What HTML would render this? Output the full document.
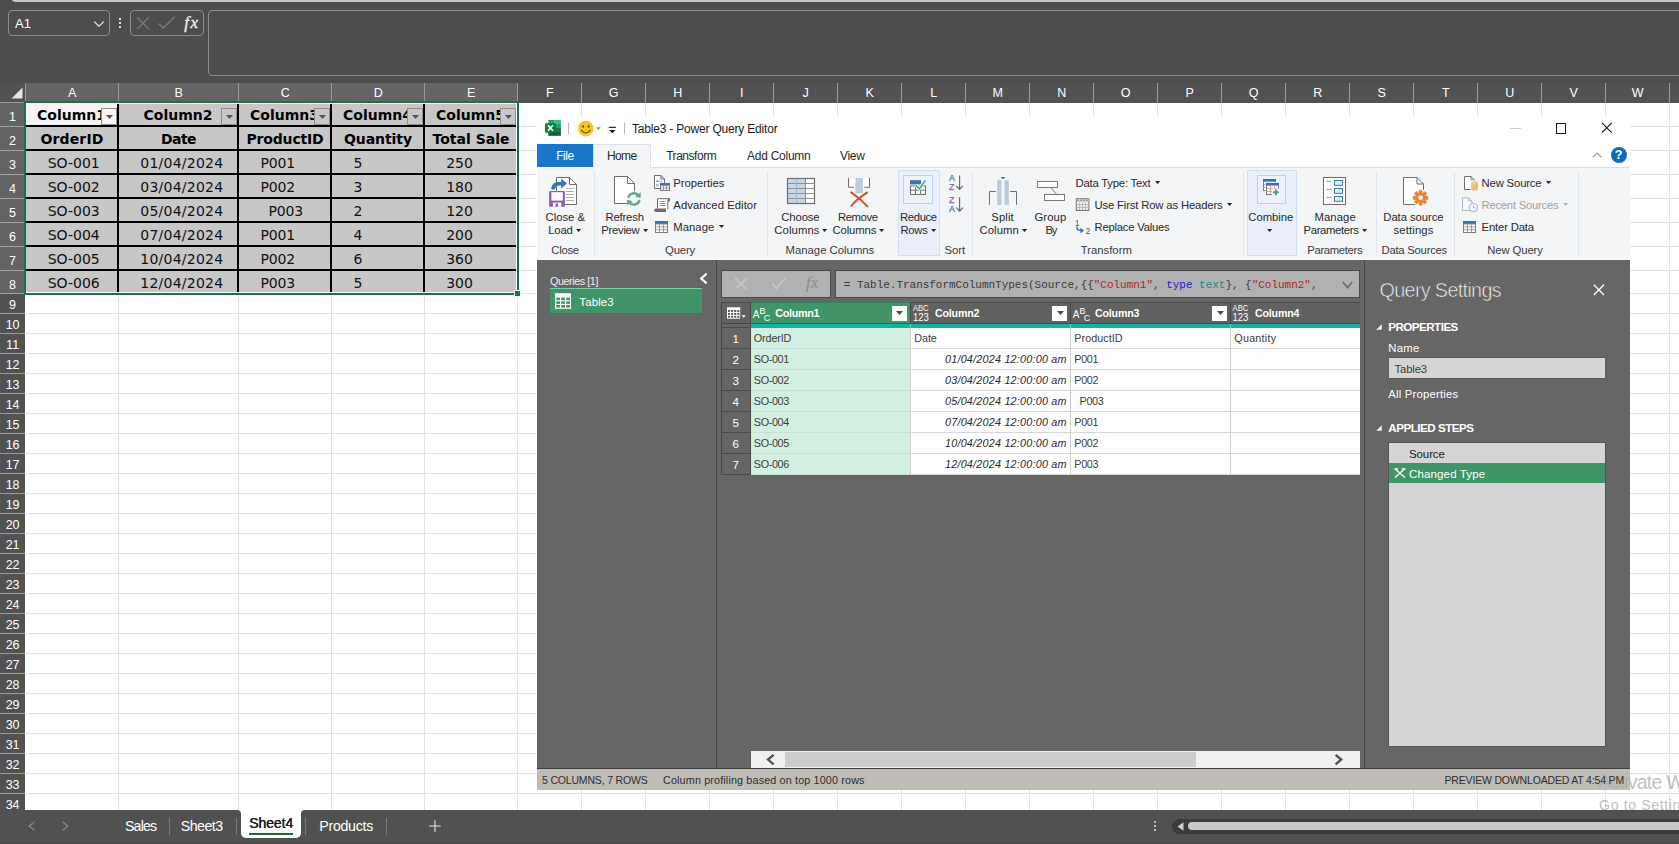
<!DOCTYPE html>
<html lang="en"><head><meta charset="utf-8"><title>Table3 - Power Query Editor</title>
<style>
html,body{margin:0;padding:0;}
body{width:1679px;height:844px;overflow:hidden;background:#4d4d4d;position:relative;font-family:'Liberation Sans', sans-serif;}
#root{position:absolute;left:0;top:0;width:1679px;height:844px;overflow:hidden;}
#root div,#root svg{position:absolute;box-sizing:border-box;}
.t{white-space:pre;}
svg{overflow:visible;}
</style></head>
<body><div id="root">
<div style="left:0px;top:0px;width:1679px;height:103px;background:#4d4d4d;"></div>
<div style="left:9.5px;top:-8px;width:1679px;height:10.2px;background:#c8c8c8;border-radius:5px 0 0 5px;border-left:1.5px solid #2a2a2a;"></div>
<div style="left:8px;top:10px;width:102px;height:26px;border:1px solid #8c8c8c;border-radius:4px;"></div>
<div class="t" style="left:15.00px;top:13.60px;font:400 13px/20px 'Liberation Sans', sans-serif;color:#fff;letter-spacing:0.047px;">A1</div>
<svg style="left:93px;top:20px" width="12" height="8" viewBox="0 0 12 8"><path d="M1.2 1.6 L6 6.2 L10.8 1.6" fill="none" stroke="#e6e6e6" stroke-width="1.3"/></svg>
<div style="left:118.6px;top:17.7px;width:2.4px;height:2.4px;background:#f0f0f0;border-radius:0.6px;"></div>
<div style="left:118.6px;top:21.900000000000002px;width:2.4px;height:2.4px;background:#f0f0f0;border-radius:0.6px;"></div>
<div style="left:118.6px;top:26.1px;width:2.4px;height:2.4px;background:#f0f0f0;border-radius:0.6px;"></div>
<div style="left:130px;top:10px;width:74px;height:26px;border:1px solid #8c8c8c;border-radius:4px;"></div>
<svg style="left:136px;top:15px" width="66" height="16" viewBox="0 0 66 16"><path d="M1.1 2.4 L12.9 14.2 M12.9 2.4 L1.1 14.2" stroke="#858585" stroke-width="1.1" fill="none"/><path d="M22.8 8.6 L27.3 13 L38.8 1.8" stroke="#858585" stroke-width="1.1" fill="none"/></svg>
<div class="t" style="left:184.30px;top:12.60px;font:italic 400 17px/20px 'Liberation Serif', serif;color:#ededed;letter-spacing:1.359px;-webkit-text-stroke:0.35px #ededed;">fx</div>
<div style="left:208px;top:10px;width:1679px;height:66px;border:1px solid #8c8c8c;border-radius:4px;"></div>
<div style="left:0px;top:83px;width:1679px;height:20px;background:#525252;"></div>
<div style="left:26px;top:83px;width:491px;height:19px;background:#646464;"></div>
<div style="left:25px;top:83px;width:1px;height:19px;background:#9a9a9a;"></div>
<div style="left:118px;top:83px;width:1px;height:19px;background:#9a9a9a;"></div>
<div style="left:238px;top:83px;width:1px;height:19px;background:#9a9a9a;"></div>
<div style="left:331px;top:83px;width:1px;height:19px;background:#9a9a9a;"></div>
<div style="left:424px;top:83px;width:1px;height:19px;background:#9a9a9a;"></div>
<div style="left:517px;top:83px;width:1px;height:19px;background:#9a9a9a;"></div>
<div style="left:581px;top:83px;width:1px;height:20px;background:#9a9a9a;"></div>
<div style="left:645px;top:83px;width:1px;height:20px;background:#9a9a9a;"></div>
<div style="left:709px;top:83px;width:1px;height:20px;background:#9a9a9a;"></div>
<div style="left:773px;top:83px;width:1px;height:20px;background:#9a9a9a;"></div>
<div style="left:837px;top:83px;width:1px;height:20px;background:#9a9a9a;"></div>
<div style="left:901px;top:83px;width:1px;height:20px;background:#9a9a9a;"></div>
<div style="left:965px;top:83px;width:1px;height:20px;background:#9a9a9a;"></div>
<div style="left:1029px;top:83px;width:1px;height:20px;background:#9a9a9a;"></div>
<div style="left:1093px;top:83px;width:1px;height:20px;background:#9a9a9a;"></div>
<div style="left:1157px;top:83px;width:1px;height:20px;background:#9a9a9a;"></div>
<div style="left:1221px;top:83px;width:1px;height:20px;background:#9a9a9a;"></div>
<div style="left:1285px;top:83px;width:1px;height:20px;background:#9a9a9a;"></div>
<div style="left:1349px;top:83px;width:1px;height:20px;background:#9a9a9a;"></div>
<div style="left:1413px;top:83px;width:1px;height:20px;background:#9a9a9a;"></div>
<div style="left:1477px;top:83px;width:1px;height:20px;background:#9a9a9a;"></div>
<div style="left:1541px;top:83px;width:1px;height:20px;background:#9a9a9a;"></div>
<div style="left:1605px;top:83px;width:1px;height:20px;background:#9a9a9a;"></div>
<div style="left:1669px;top:83px;width:1px;height:20px;background:#9a9a9a;"></div>
<div style="left:1733px;top:83px;width:1px;height:20px;background:#9a9a9a;"></div>
<div style="left:1797px;top:83px;width:1px;height:20px;background:#9a9a9a;"></div>
<div class="t" style="left:68.03px;top:82.50px;font:400 12.5px/20px 'Liberation Sans', sans-serif;color:#fff;">A</div>
<div class="t" style="left:174.53px;top:82.50px;font:400 12.5px/20px 'Liberation Sans', sans-serif;color:#fff;">B</div>
<div class="t" style="left:280.68px;top:82.50px;font:400 12.5px/20px 'Liberation Sans', sans-serif;color:#fff;">C</div>
<div class="t" style="left:373.68px;top:82.50px;font:400 12.5px/20px 'Liberation Sans', sans-serif;color:#fff;">D</div>
<div class="t" style="left:467.03px;top:82.50px;font:400 12.5px/20px 'Liberation Sans', sans-serif;color:#fff;">E</div>
<div class="t" style="left:545.88px;top:82.50px;font:400 12.5px/20px 'Liberation Sans', sans-serif;color:#fff;">F</div>
<div class="t" style="left:608.83px;top:82.50px;font:400 12.5px/20px 'Liberation Sans', sans-serif;color:#fff;">G</div>
<div class="t" style="left:673.18px;top:82.50px;font:400 12.5px/20px 'Liberation Sans', sans-serif;color:#fff;">H</div>
<div class="t" style="left:739.96px;top:82.50px;font:400 12.5px/20px 'Liberation Sans', sans-serif;color:#fff;">I</div>
<div class="t" style="left:802.58px;top:82.50px;font:400 12.5px/20px 'Liberation Sans', sans-serif;color:#fff;">J</div>
<div class="t" style="left:865.53px;top:82.50px;font:400 12.5px/20px 'Liberation Sans', sans-serif;color:#fff;">K</div>
<div class="t" style="left:930.22px;top:82.50px;font:400 12.5px/20px 'Liberation Sans', sans-serif;color:#fff;">L</div>
<div class="t" style="left:992.49px;top:82.50px;font:400 12.5px/20px 'Liberation Sans', sans-serif;color:#fff;">M</div>
<div class="t" style="left:1057.18px;top:82.50px;font:400 12.5px/20px 'Liberation Sans', sans-serif;color:#fff;">N</div>
<div class="t" style="left:1120.83px;top:82.50px;font:400 12.5px/20px 'Liberation Sans', sans-serif;color:#fff;">O</div>
<div class="t" style="left:1185.53px;top:82.50px;font:400 12.5px/20px 'Liberation Sans', sans-serif;color:#fff;">P</div>
<div class="t" style="left:1248.83px;top:82.50px;font:400 12.5px/20px 'Liberation Sans', sans-serif;color:#fff;">Q</div>
<div class="t" style="left:1313.18px;top:82.50px;font:400 12.5px/20px 'Liberation Sans', sans-serif;color:#fff;">R</div>
<div class="t" style="left:1377.53px;top:82.50px;font:400 12.5px/20px 'Liberation Sans', sans-serif;color:#fff;">S</div>
<div class="t" style="left:1441.88px;top:82.50px;font:400 12.5px/20px 'Liberation Sans', sans-serif;color:#fff;">T</div>
<div class="t" style="left:1505.18px;top:82.50px;font:400 12.5px/20px 'Liberation Sans', sans-serif;color:#fff;">U</div>
<div class="t" style="left:1569.53px;top:82.50px;font:400 12.5px/20px 'Liberation Sans', sans-serif;color:#fff;">V</div>
<div class="t" style="left:1631.79px;top:82.50px;font:400 12.5px/20px 'Liberation Sans', sans-serif;color:#fff;">W</div>
<svg style="left:10px;top:86px" width="14" height="14" viewBox="0 0 14 14"><path d="M12.5 1.5 L12.5 12.5 L1.5 12.5 Z" fill="#e4e4e4"/></svg>
<div style="left:25px;top:103px;width:1679px;height:707px;background:#fff;"></div>
<div style="left:25px;top:126px;width:1679px;height:1px;background:#e1e1e1;"></div>
<div style="left:25px;top:150px;width:1679px;height:1px;background:#e1e1e1;"></div>
<div style="left:25px;top:174px;width:1679px;height:1px;background:#e1e1e1;"></div>
<div style="left:25px;top:198px;width:1679px;height:1px;background:#e1e1e1;"></div>
<div style="left:25px;top:222px;width:1679px;height:1px;background:#e1e1e1;"></div>
<div style="left:25px;top:246px;width:1679px;height:1px;background:#e1e1e1;"></div>
<div style="left:25px;top:270px;width:1679px;height:1px;background:#e1e1e1;"></div>
<div style="left:25px;top:293px;width:1679px;height:1px;background:#e1e1e1;"></div>
<div style="left:25px;top:313px;width:1679px;height:1px;background:#e1e1e1;"></div>
<div style="left:25px;top:333px;width:1679px;height:1px;background:#e1e1e1;"></div>
<div style="left:25px;top:353px;width:1679px;height:1px;background:#e1e1e1;"></div>
<div style="left:25px;top:373px;width:1679px;height:1px;background:#e1e1e1;"></div>
<div style="left:25px;top:393px;width:1679px;height:1px;background:#e1e1e1;"></div>
<div style="left:25px;top:413px;width:1679px;height:1px;background:#e1e1e1;"></div>
<div style="left:25px;top:433px;width:1679px;height:1px;background:#e1e1e1;"></div>
<div style="left:25px;top:453px;width:1679px;height:1px;background:#e1e1e1;"></div>
<div style="left:25px;top:473px;width:1679px;height:1px;background:#e1e1e1;"></div>
<div style="left:25px;top:493px;width:1679px;height:1px;background:#e1e1e1;"></div>
<div style="left:25px;top:513px;width:1679px;height:1px;background:#e1e1e1;"></div>
<div style="left:25px;top:533px;width:1679px;height:1px;background:#e1e1e1;"></div>
<div style="left:25px;top:553px;width:1679px;height:1px;background:#e1e1e1;"></div>
<div style="left:25px;top:573px;width:1679px;height:1px;background:#e1e1e1;"></div>
<div style="left:25px;top:593px;width:1679px;height:1px;background:#e1e1e1;"></div>
<div style="left:25px;top:613px;width:1679px;height:1px;background:#e1e1e1;"></div>
<div style="left:25px;top:633px;width:1679px;height:1px;background:#e1e1e1;"></div>
<div style="left:25px;top:653px;width:1679px;height:1px;background:#e1e1e1;"></div>
<div style="left:25px;top:673px;width:1679px;height:1px;background:#e1e1e1;"></div>
<div style="left:25px;top:693px;width:1679px;height:1px;background:#e1e1e1;"></div>
<div style="left:25px;top:713px;width:1679px;height:1px;background:#e1e1e1;"></div>
<div style="left:25px;top:733px;width:1679px;height:1px;background:#e1e1e1;"></div>
<div style="left:25px;top:753px;width:1679px;height:1px;background:#e1e1e1;"></div>
<div style="left:25px;top:773px;width:1679px;height:1px;background:#e1e1e1;"></div>
<div style="left:25px;top:793px;width:1679px;height:1px;background:#e1e1e1;"></div>
<div style="left:118px;top:103px;width:1px;height:707px;background:#e1e1e1;"></div>
<div style="left:238px;top:103px;width:1px;height:707px;background:#e1e1e1;"></div>
<div style="left:331px;top:103px;width:1px;height:707px;background:#e1e1e1;"></div>
<div style="left:424px;top:103px;width:1px;height:707px;background:#e1e1e1;"></div>
<div style="left:517px;top:103px;width:1px;height:707px;background:#e1e1e1;"></div>
<div style="left:581px;top:103px;width:1px;height:707px;background:#e1e1e1;"></div>
<div style="left:645px;top:103px;width:1px;height:707px;background:#e1e1e1;"></div>
<div style="left:709px;top:103px;width:1px;height:707px;background:#e1e1e1;"></div>
<div style="left:773px;top:103px;width:1px;height:707px;background:#e1e1e1;"></div>
<div style="left:837px;top:103px;width:1px;height:707px;background:#e1e1e1;"></div>
<div style="left:901px;top:103px;width:1px;height:707px;background:#e1e1e1;"></div>
<div style="left:965px;top:103px;width:1px;height:707px;background:#e1e1e1;"></div>
<div style="left:1029px;top:103px;width:1px;height:707px;background:#e1e1e1;"></div>
<div style="left:1093px;top:103px;width:1px;height:707px;background:#e1e1e1;"></div>
<div style="left:1157px;top:103px;width:1px;height:707px;background:#e1e1e1;"></div>
<div style="left:1221px;top:103px;width:1px;height:707px;background:#e1e1e1;"></div>
<div style="left:1285px;top:103px;width:1px;height:707px;background:#e1e1e1;"></div>
<div style="left:1349px;top:103px;width:1px;height:707px;background:#e1e1e1;"></div>
<div style="left:1413px;top:103px;width:1px;height:707px;background:#e1e1e1;"></div>
<div style="left:1477px;top:103px;width:1px;height:707px;background:#e1e1e1;"></div>
<div style="left:1541px;top:103px;width:1px;height:707px;background:#e1e1e1;"></div>
<div style="left:1605px;top:103px;width:1px;height:707px;background:#e1e1e1;"></div>
<div style="left:1669px;top:103px;width:1px;height:707px;background:#e1e1e1;"></div>
<div style="left:1733px;top:103px;width:1px;height:707px;background:#e1e1e1;"></div>
<div style="left:1797px;top:103px;width:1px;height:707px;background:#e1e1e1;"></div>
<div style="left:0px;top:103px;width:25px;height:707px;background:#525252;"></div>
<div style="left:0px;top:103px;width:24px;height:191px;background:#646464;"></div>
<div style="left:0px;top:102px;width:24px;height:1px;background:#9a9a9a;"></div>
<div style="left:0px;top:126px;width:25px;height:1px;background:#a2a2a2;"></div>
<div style="left:0px;top:150px;width:25px;height:1px;background:#a2a2a2;"></div>
<div style="left:0px;top:174px;width:25px;height:1px;background:#a2a2a2;"></div>
<div style="left:0px;top:198px;width:25px;height:1px;background:#a2a2a2;"></div>
<div style="left:0px;top:222px;width:25px;height:1px;background:#a2a2a2;"></div>
<div style="left:0px;top:246px;width:25px;height:1px;background:#a2a2a2;"></div>
<div style="left:0px;top:270px;width:25px;height:1px;background:#a2a2a2;"></div>
<div style="left:0px;top:293px;width:25px;height:1px;background:#a2a2a2;"></div>
<div style="left:0px;top:313px;width:25px;height:1px;background:#9a9a9a;"></div>
<div style="left:0px;top:333px;width:25px;height:1px;background:#9a9a9a;"></div>
<div style="left:0px;top:353px;width:25px;height:1px;background:#9a9a9a;"></div>
<div style="left:0px;top:373px;width:25px;height:1px;background:#9a9a9a;"></div>
<div style="left:0px;top:393px;width:25px;height:1px;background:#9a9a9a;"></div>
<div style="left:0px;top:413px;width:25px;height:1px;background:#9a9a9a;"></div>
<div style="left:0px;top:433px;width:25px;height:1px;background:#9a9a9a;"></div>
<div style="left:0px;top:453px;width:25px;height:1px;background:#9a9a9a;"></div>
<div style="left:0px;top:473px;width:25px;height:1px;background:#9a9a9a;"></div>
<div style="left:0px;top:493px;width:25px;height:1px;background:#9a9a9a;"></div>
<div style="left:0px;top:513px;width:25px;height:1px;background:#9a9a9a;"></div>
<div style="left:0px;top:533px;width:25px;height:1px;background:#9a9a9a;"></div>
<div style="left:0px;top:553px;width:25px;height:1px;background:#9a9a9a;"></div>
<div style="left:0px;top:573px;width:25px;height:1px;background:#9a9a9a;"></div>
<div style="left:0px;top:593px;width:25px;height:1px;background:#9a9a9a;"></div>
<div style="left:0px;top:613px;width:25px;height:1px;background:#9a9a9a;"></div>
<div style="left:0px;top:633px;width:25px;height:1px;background:#9a9a9a;"></div>
<div style="left:0px;top:653px;width:25px;height:1px;background:#9a9a9a;"></div>
<div style="left:0px;top:673px;width:25px;height:1px;background:#9a9a9a;"></div>
<div style="left:0px;top:693px;width:25px;height:1px;background:#9a9a9a;"></div>
<div style="left:0px;top:713px;width:25px;height:1px;background:#9a9a9a;"></div>
<div style="left:0px;top:733px;width:25px;height:1px;background:#9a9a9a;"></div>
<div style="left:0px;top:753px;width:25px;height:1px;background:#9a9a9a;"></div>
<div style="left:0px;top:773px;width:25px;height:1px;background:#9a9a9a;"></div>
<div style="left:0px;top:793px;width:25px;height:1px;background:#9a9a9a;"></div>
<div class="t" style="left:9.12px;top:106.70px;font:400 12.5px/20px 'Liberation Sans', sans-serif;color:#fff;">1</div>
<div class="t" style="left:9.12px;top:130.70px;font:400 12.5px/20px 'Liberation Sans', sans-serif;color:#fff;">2</div>
<div class="t" style="left:9.12px;top:154.70px;font:400 12.5px/20px 'Liberation Sans', sans-serif;color:#fff;">3</div>
<div class="t" style="left:9.12px;top:178.70px;font:400 12.5px/20px 'Liberation Sans', sans-serif;color:#fff;">4</div>
<div class="t" style="left:9.12px;top:202.70px;font:400 12.5px/20px 'Liberation Sans', sans-serif;color:#fff;">5</div>
<div class="t" style="left:9.12px;top:226.70px;font:400 12.5px/20px 'Liberation Sans', sans-serif;color:#fff;">6</div>
<div class="t" style="left:9.12px;top:250.70px;font:400 12.5px/20px 'Liberation Sans', sans-serif;color:#fff;">7</div>
<div class="t" style="left:9.12px;top:274.70px;font:400 12.5px/20px 'Liberation Sans', sans-serif;color:#fff;">8</div>
<div class="t" style="left:9.12px;top:294.70px;font:400 12.5px/20px 'Liberation Sans', sans-serif;color:#fff;">9</div>
<div class="t" style="left:5.65px;top:314.70px;font:400 12.5px/20px 'Liberation Sans', sans-serif;color:#fff;">10</div>
<div class="t" style="left:6.11px;top:334.70px;font:400 12.5px/20px 'Liberation Sans', sans-serif;color:#fff;">11</div>
<div class="t" style="left:5.65px;top:354.70px;font:400 12.5px/20px 'Liberation Sans', sans-serif;color:#fff;">12</div>
<div class="t" style="left:5.65px;top:374.70px;font:400 12.5px/20px 'Liberation Sans', sans-serif;color:#fff;">13</div>
<div class="t" style="left:5.65px;top:394.70px;font:400 12.5px/20px 'Liberation Sans', sans-serif;color:#fff;">14</div>
<div class="t" style="left:5.65px;top:414.70px;font:400 12.5px/20px 'Liberation Sans', sans-serif;color:#fff;">15</div>
<div class="t" style="left:5.65px;top:434.70px;font:400 12.5px/20px 'Liberation Sans', sans-serif;color:#fff;">16</div>
<div class="t" style="left:5.65px;top:454.70px;font:400 12.5px/20px 'Liberation Sans', sans-serif;color:#fff;">17</div>
<div class="t" style="left:5.65px;top:474.70px;font:400 12.5px/20px 'Liberation Sans', sans-serif;color:#fff;">18</div>
<div class="t" style="left:5.65px;top:494.70px;font:400 12.5px/20px 'Liberation Sans', sans-serif;color:#fff;">19</div>
<div class="t" style="left:5.65px;top:514.70px;font:400 12.5px/20px 'Liberation Sans', sans-serif;color:#fff;">20</div>
<div class="t" style="left:5.65px;top:534.70px;font:400 12.5px/20px 'Liberation Sans', sans-serif;color:#fff;">21</div>
<div class="t" style="left:5.65px;top:554.70px;font:400 12.5px/20px 'Liberation Sans', sans-serif;color:#fff;">22</div>
<div class="t" style="left:5.65px;top:574.70px;font:400 12.5px/20px 'Liberation Sans', sans-serif;color:#fff;">23</div>
<div class="t" style="left:5.65px;top:594.70px;font:400 12.5px/20px 'Liberation Sans', sans-serif;color:#fff;">24</div>
<div class="t" style="left:5.65px;top:614.70px;font:400 12.5px/20px 'Liberation Sans', sans-serif;color:#fff;">25</div>
<div class="t" style="left:5.65px;top:634.70px;font:400 12.5px/20px 'Liberation Sans', sans-serif;color:#fff;">26</div>
<div class="t" style="left:5.65px;top:654.70px;font:400 12.5px/20px 'Liberation Sans', sans-serif;color:#fff;">27</div>
<div class="t" style="left:5.65px;top:674.70px;font:400 12.5px/20px 'Liberation Sans', sans-serif;color:#fff;">28</div>
<div class="t" style="left:5.65px;top:694.70px;font:400 12.5px/20px 'Liberation Sans', sans-serif;color:#fff;">29</div>
<div class="t" style="left:5.65px;top:714.70px;font:400 12.5px/20px 'Liberation Sans', sans-serif;color:#fff;">30</div>
<div class="t" style="left:5.65px;top:734.70px;font:400 12.5px/20px 'Liberation Sans', sans-serif;color:#fff;">31</div>
<div class="t" style="left:5.65px;top:754.70px;font:400 12.5px/20px 'Liberation Sans', sans-serif;color:#fff;">32</div>
<div class="t" style="left:5.65px;top:774.70px;font:400 12.5px/20px 'Liberation Sans', sans-serif;color:#fff;">33</div>
<div class="t" style="left:5.65px;top:794.70px;font:400 12.5px/20px 'Liberation Sans', sans-serif;color:#fff;">34</div>
<div class="t" style="left:5.65px;top:814.70px;font:400 12.5px/20px 'Liberation Sans', sans-serif;color:#fff;">35</div>
<div style="left:26px;top:103px;width:490px;height:189px;background:#c7c7c7;"></div>
<div style="left:26px;top:103px;width:91px;height:22px;background:#f4f4f4;"></div>
<div style="left:26px;top:125px;width:490px;height:2px;background:#000;"></div>
<div style="left:26px;top:149px;width:490px;height:2px;background:#000;"></div>
<div style="left:26px;top:173px;width:490px;height:2px;background:#000;"></div>
<div style="left:26px;top:197px;width:490px;height:2px;background:#000;"></div>
<div style="left:26px;top:221px;width:490px;height:2px;background:#000;"></div>
<div style="left:26px;top:245px;width:490px;height:2px;background:#000;"></div>
<div style="left:26px;top:269px;width:490px;height:2px;background:#000;"></div>
<div style="left:117px;top:104px;width:2px;height:188px;background:#000;"></div>
<div style="left:237px;top:104px;width:2px;height:188px;background:#000;"></div>
<div style="left:330px;top:104px;width:2px;height:188px;background:#000;"></div>
<div style="left:423px;top:104px;width:2px;height:188px;background:#000;"></div>
<div class="t" style="left:37.00px;top:104.60px;font:700 14px/20px 'DejaVu Sans', 'Liberation Sans', sans-serif;color:#000;letter-spacing:0.004px;">Column1</div>
<div style="left:101px;top:108px;width:16px;height:17px;background:#f6f7f8;border:1px solid #8e8e8e;"></div>
<svg style="left:106px;top:115px" width="7" height="4" viewBox="0 0 7 4"><path d="M0 0 L7 0 L3.5 4 Z" fill="#555"/></svg>
<div class="t" style="left:143.50px;top:104.60px;font:700 14px/20px 'DejaVu Sans', 'Liberation Sans', sans-serif;color:#000;letter-spacing:0.004px;">Column2</div>
<div style="left:221px;top:108px;width:16px;height:17px;background:#c8c8c8;border:1px solid #8e8e8e;"></div>
<svg style="left:226px;top:115px" width="7" height="4" viewBox="0 0 7 4"><path d="M0 0 L7 0 L3.5 4 Z" fill="#555"/></svg>
<div class="t" style="left:250.00px;top:104.60px;font:700 14px/20px 'DejaVu Sans', 'Liberation Sans', sans-serif;color:#000;letter-spacing:0.004px;">Column3</div>
<div style="left:314px;top:108px;width:16px;height:17px;background:#c8c8c8;border:1px solid #8e8e8e;"></div>
<svg style="left:319px;top:115px" width="7" height="4" viewBox="0 0 7 4"><path d="M0 0 L7 0 L3.5 4 Z" fill="#555"/></svg>
<div class="t" style="left:343.00px;top:104.60px;font:700 14px/20px 'DejaVu Sans', 'Liberation Sans', sans-serif;color:#000;letter-spacing:0.004px;">Column4</div>
<div style="left:407px;top:108px;width:16px;height:17px;background:#c8c8c8;border:1px solid #8e8e8e;"></div>
<svg style="left:412px;top:115px" width="7" height="4" viewBox="0 0 7 4"><path d="M0 0 L7 0 L3.5 4 Z" fill="#555"/></svg>
<div class="t" style="left:436.00px;top:104.60px;font:700 14px/20px 'DejaVu Sans', 'Liberation Sans', sans-serif;color:#000;letter-spacing:0.004px;">Column5</div>
<div style="left:500px;top:108px;width:16px;height:17px;background:#c8c8c8;border:1px solid #8e8e8e;"></div>
<svg style="left:505px;top:115px" width="7" height="4" viewBox="0 0 7 4"><path d="M0 0 L7 0 L3.5 4 Z" fill="#555"/></svg>
<div class="t" style="left:40.50px;top:128.60px;font:700 14px/20px 'DejaVu Sans', 'Liberation Sans', sans-serif;color:#000;letter-spacing:0.134px;">OrderID</div>
<div class="t" style="left:161.00px;top:128.60px;font:700 14px/20px 'DejaVu Sans', 'Liberation Sans', sans-serif;color:#000;letter-spacing:-0.566px;">Date</div>
<div class="t" style="left:246.50px;top:128.60px;font:700 14px/20px 'DejaVu Sans', 'Liberation Sans', sans-serif;color:#000;letter-spacing:-0.177px;">ProductID</div>
<div class="t" style="left:344.00px;top:128.60px;font:700 14px/20px 'DejaVu Sans', 'Liberation Sans', sans-serif;color:#000;letter-spacing:-0.074px;">Quantity</div>
<div class="t" style="left:432.50px;top:128.60px;font:700 14px/20px 'DejaVu Sans', 'Liberation Sans', sans-serif;color:#000;letter-spacing:0.005px;">Total Sale</div>
<div class="t" style="left:47.70px;top:152.80px;font:400 14px/20px 'DejaVu Sans', 'Liberation Sans', sans-serif;color:#111;letter-spacing:-0.013px;">SO-001</div>
<div class="t" style="left:140.30px;top:152.80px;font:400 14px/20px 'DejaVu Sans', 'Liberation Sans', sans-serif;color:#111;letter-spacing:0.230px;">01/04/2024</div>
<div class="t" style="left:260.60px;top:152.80px;font:400 14px/20px 'DejaVu Sans', 'Liberation Sans', sans-serif;color:#111;letter-spacing:-0.168px;">P001</div>
<div class="t" style="left:353.60px;top:152.80px;font:400 14px/20px 'DejaVu Sans', 'Liberation Sans', sans-serif;color:#111;">5</div>
<div class="t" style="left:446.20px;top:152.80px;font:400 14px/20px 'DejaVu Sans', 'Liberation Sans', sans-serif;color:#111;letter-spacing:-0.011px;">250</div>
<div class="t" style="left:47.70px;top:176.80px;font:400 14px/20px 'DejaVu Sans', 'Liberation Sans', sans-serif;color:#111;letter-spacing:-0.013px;">SO-002</div>
<div class="t" style="left:140.30px;top:176.80px;font:400 14px/20px 'DejaVu Sans', 'Liberation Sans', sans-serif;color:#111;letter-spacing:0.230px;">03/04/2024</div>
<div class="t" style="left:260.60px;top:176.80px;font:400 14px/20px 'DejaVu Sans', 'Liberation Sans', sans-serif;color:#111;letter-spacing:-0.168px;">P002</div>
<div class="t" style="left:353.60px;top:176.80px;font:400 14px/20px 'DejaVu Sans', 'Liberation Sans', sans-serif;color:#111;">3</div>
<div class="t" style="left:446.20px;top:176.80px;font:400 14px/20px 'DejaVu Sans', 'Liberation Sans', sans-serif;color:#111;letter-spacing:-0.011px;">180</div>
<div class="t" style="left:47.70px;top:200.80px;font:400 14px/20px 'DejaVu Sans', 'Liberation Sans', sans-serif;color:#111;letter-spacing:-0.013px;">SO-003</div>
<div class="t" style="left:140.30px;top:200.80px;font:400 14px/20px 'DejaVu Sans', 'Liberation Sans', sans-serif;color:#111;letter-spacing:0.230px;">05/04/2024</div>
<div class="t" style="left:268.60px;top:200.80px;font:400 14px/20px 'DejaVu Sans', 'Liberation Sans', sans-serif;color:#111;letter-spacing:-0.168px;">P003</div>
<div class="t" style="left:353.60px;top:200.80px;font:400 14px/20px 'DejaVu Sans', 'Liberation Sans', sans-serif;color:#111;">2</div>
<div class="t" style="left:446.20px;top:200.80px;font:400 14px/20px 'DejaVu Sans', 'Liberation Sans', sans-serif;color:#111;letter-spacing:-0.011px;">120</div>
<div class="t" style="left:47.70px;top:224.80px;font:400 14px/20px 'DejaVu Sans', 'Liberation Sans', sans-serif;color:#111;letter-spacing:-0.013px;">SO-004</div>
<div class="t" style="left:140.30px;top:224.80px;font:400 14px/20px 'DejaVu Sans', 'Liberation Sans', sans-serif;color:#111;letter-spacing:0.230px;">07/04/2024</div>
<div class="t" style="left:260.60px;top:224.80px;font:400 14px/20px 'DejaVu Sans', 'Liberation Sans', sans-serif;color:#111;letter-spacing:-0.168px;">P001</div>
<div class="t" style="left:353.60px;top:224.80px;font:400 14px/20px 'DejaVu Sans', 'Liberation Sans', sans-serif;color:#111;">4</div>
<div class="t" style="left:446.20px;top:224.80px;font:400 14px/20px 'DejaVu Sans', 'Liberation Sans', sans-serif;color:#111;letter-spacing:-0.011px;">200</div>
<div class="t" style="left:47.70px;top:248.80px;font:400 14px/20px 'DejaVu Sans', 'Liberation Sans', sans-serif;color:#111;letter-spacing:-0.013px;">SO-005</div>
<div class="t" style="left:140.30px;top:248.80px;font:400 14px/20px 'DejaVu Sans', 'Liberation Sans', sans-serif;color:#111;letter-spacing:0.230px;">10/04/2024</div>
<div class="t" style="left:260.60px;top:248.80px;font:400 14px/20px 'DejaVu Sans', 'Liberation Sans', sans-serif;color:#111;letter-spacing:-0.168px;">P002</div>
<div class="t" style="left:353.60px;top:248.80px;font:400 14px/20px 'DejaVu Sans', 'Liberation Sans', sans-serif;color:#111;">6</div>
<div class="t" style="left:446.20px;top:248.80px;font:400 14px/20px 'DejaVu Sans', 'Liberation Sans', sans-serif;color:#111;letter-spacing:-0.011px;">360</div>
<div class="t" style="left:47.70px;top:272.80px;font:400 14px/20px 'DejaVu Sans', 'Liberation Sans', sans-serif;color:#111;letter-spacing:-0.013px;">SO-006</div>
<div class="t" style="left:140.30px;top:272.80px;font:400 14px/20px 'DejaVu Sans', 'Liberation Sans', sans-serif;color:#111;letter-spacing:0.230px;">12/04/2024</div>
<div class="t" style="left:260.60px;top:272.80px;font:400 14px/20px 'DejaVu Sans', 'Liberation Sans', sans-serif;color:#111;letter-spacing:-0.168px;">P003</div>
<div class="t" style="left:353.60px;top:272.80px;font:400 14px/20px 'DejaVu Sans', 'Liberation Sans', sans-serif;color:#111;">5</div>
<div class="t" style="left:446.20px;top:272.80px;font:400 14px/20px 'DejaVu Sans', 'Liberation Sans', sans-serif;color:#111;letter-spacing:-0.011px;">300</div>
<div style="left:24px;top:101px;width:495px;height:2px;background:#1e7145;"></div>
<div style="left:24px;top:293px;width:490px;height:2px;background:#1e7145;"></div>
<div style="left:24px;top:101px;width:2px;height:194px;background:#1e7145;"></div>
<div style="left:517px;top:101px;width:2px;height:189px;background:#1e7145;"></div>
<div style="left:26px;top:103px;width:490px;height:1px;background:#f4f4f4;"></div>
<div style="left:26px;top:292px;width:490px;height:1px;background:#fff;"></div>
<div style="left:516px;top:103px;width:1px;height:190px;background:#fff;"></div>
<div style="left:514px;top:290px;width:7px;height:7px;background:#fff;"></div>
<div style="left:515px;top:291px;width:5px;height:5px;background:#217346;"></div>
<div style="left:536px;top:116px;width:1094px;height:674px;background:#fff;"></div>
<div class="t" style="left:632.00px;top:118.60px;font:400 12px/20px 'Liberation Sans', sans-serif;color:#1a1a1a;letter-spacing:-0.194px;">Table3 - Power Query Editor</div>
<div style="left:568px;top:122.5px;width:1px;height:11px;background:#b5b5b5;"></div>
<div style="left:624px;top:122.5px;width:1px;height:11px;background:#b5b5b5;"></div>
<div style="left:1510px;top:127.5px;width:11px;height:1px;background:#cfcfcf;"></div>
<div style="left:1555.5px;top:123px;width:10.5px;height:10.5px;border:1.3px solid #1a1a1a;"></div>
<svg style="left:1601px;top:122.3px" width="12" height="12" viewBox="0 0 12 12"><path d="M0.9 0.9 L10.7 10.7 M10.7 0.9 L0.9 10.7" stroke="#1a1a1a" stroke-width="1.15" fill="none"/></svg>
<div style="left:537px;top:144px;width:56px;height:23px;background:#1b75c9;"></div>
<div class="t" style="left:556.25px;top:145.60px;font:400 12px/20px 'Liberation Sans', sans-serif;color:#fff;letter-spacing:-0.461px;">File</div>
<div style="left:593px;top:144px;width:57.5px;height:24px;background:#f3f5f7;border:1px solid #dcdfe3;border-bottom:none;"></div>
<div class="t" style="left:607.00px;top:145.60px;font:400 12px/20px 'Liberation Sans', sans-serif;color:#2a2a2a;letter-spacing:-0.629px;">Home</div>
<div class="t" style="left:666.20px;top:145.60px;font:400 12px/20px 'Liberation Sans', sans-serif;color:#2a2a2a;letter-spacing:-0.470px;">Transform</div>
<div class="t" style="left:747.00px;top:145.60px;font:400 12px/20px 'Liberation Sans', sans-serif;color:#2a2a2a;letter-spacing:-0.255px;">Add Column</div>
<div class="t" style="left:840.00px;top:145.60px;font:400 12px/20px 'Liberation Sans', sans-serif;color:#2a2a2a;letter-spacing:-0.324px;">View</div>
<svg style="left:1592px;top:152px" width="10" height="6" viewBox="0 0 10 6"><path d="M0.8 5.2 L5 1 L9.2 5.2" stroke="#9a9a9a" stroke-width="1.2" fill="none"/></svg>
<div style="left:1610.5px;top:146.5px;width:16px;height:16px;background:#0f6cbd;border-radius:50%;"></div>
<div class="t" style="left:1614.78px;top:144.60px;font:700 12.5px/20px 'Liberation Sans', sans-serif;color:#fff;">?</div>
<div style="left:537px;top:167.5px;width:1093px;height:92px;background:#f3f5f7;"></div>
<div style="left:650px;top:167px;width:980px;height:1px;background:#dcdfe3;"></div>
<div style="left:537px;top:258.5px;width:1093px;height:1.5px;background:#fafbfc;"></div>
<div style="left:594px;top:172px;width:1px;height:84px;background:#e2e5e9;"></div>
<div style="left:766.7px;top:172px;width:1px;height:84px;background:#e2e5e9;"></div>
<div style="left:972.3px;top:172px;width:1px;height:84px;background:#e2e5e9;"></div>
<div style="left:1243px;top:172px;width:1px;height:84px;background:#e2e5e9;"></div>
<div style="left:1376.3px;top:172px;width:1px;height:84px;background:#e2e5e9;"></div>
<div style="left:1454px;top:172px;width:1px;height:84px;background:#e2e5e9;"></div>
<div style="left:1578px;top:172px;width:1px;height:84px;background:#e2e5e9;"></div>
<div style="left:897.5px;top:170px;width:42px;height:86px;background:#e9f0f9;border:1px solid #cfe0f3;"></div>
<div style="left:903px;top:175px;width:29.5px;height:29px;background:#edf3fb;border:1px solid #b9d3ef;"></div>
<div style="left:1246.5px;top:170px;width:50px;height:86px;background:#e9f0f9;border:1px solid #cfe0f3;"></div>
<div style="left:1256.5px;top:175px;width:29px;height:29px;background:#edf3fb;border:1px solid #b9d3ef;"></div>
<div class="t" style="left:545.50px;top:207.20px;font:400 11.3px/20px 'Liberation Sans', sans-serif;color:#2a2a2a;letter-spacing:-0.009px;">Close &amp;</div>
<div class="t" style="left:548.30px;top:220.20px;font:400 11.3px/20px 'Liberation Sans', sans-serif;color:#2a2a2a;letter-spacing:-0.235px;">Load</div>
<svg style="left:575.9px;top:229.4px" width="5.2" height="3.0" viewBox="0 0 5.2 3"><path d="M0 0 L5.2 0 L2.6 3 Z" fill="#262626"/></svg>
<div class="t" style="left:605.50px;top:207.20px;font:400 11.3px/20px 'Liberation Sans', sans-serif;color:#2a2a2a;letter-spacing:-0.180px;">Refresh</div>
<div class="t" style="left:601.30px;top:220.20px;font:400 11.3px/20px 'Liberation Sans', sans-serif;color:#2a2a2a;letter-spacing:-0.284px;">Preview</div>
<svg style="left:642.6999999999999px;top:229.4px" width="5.2" height="3.0" viewBox="0 0 5.2 3"><path d="M0 0 L5.2 0 L2.6 3 Z" fill="#262626"/></svg>
<div class="t" style="left:781.30px;top:207.20px;font:400 11.3px/20px 'Liberation Sans', sans-serif;color:#2a2a2a;letter-spacing:-0.126px;">Choose</div>
<div class="t" style="left:774.30px;top:220.20px;font:400 11.3px/20px 'Liberation Sans', sans-serif;color:#2a2a2a;letter-spacing:0.089px;">Columns</div>
<svg style="left:821.6999999999999px;top:229.4px" width="5.2" height="3.0" viewBox="0 0 5.2 3"><path d="M0 0 L5.2 0 L2.6 3 Z" fill="#262626"/></svg>
<div class="t" style="left:838.00px;top:207.20px;font:400 11.3px/20px 'Liberation Sans', sans-serif;color:#2a2a2a;letter-spacing:-0.430px;">Remove</div>
<div class="t" style="left:832.50px;top:220.20px;font:400 11.3px/20px 'Liberation Sans', sans-serif;color:#2a2a2a;letter-spacing:-0.111px;">Columns</div>
<svg style="left:879.4px;top:229.4px" width="5.2" height="3.0" viewBox="0 0 5.2 3"><path d="M0 0 L5.2 0 L2.6 3 Z" fill="#262626"/></svg>
<div class="t" style="left:900.00px;top:207.20px;font:400 11.3px/20px 'Liberation Sans', sans-serif;color:#2a2a2a;letter-spacing:-0.359px;">Reduce</div>
<div class="t" style="left:900.50px;top:220.20px;font:400 11.3px/20px 'Liberation Sans', sans-serif;color:#2a2a2a;letter-spacing:-0.312px;">Rows</div>
<svg style="left:930.6999999999999px;top:229.4px" width="5.2" height="3.0" viewBox="0 0 5.2 3"><path d="M0 0 L5.2 0 L2.6 3 Z" fill="#262626"/></svg>
<div class="t" style="left:991.30px;top:207.20px;font:400 11.3px/20px 'Liberation Sans', sans-serif;color:#2a2a2a;letter-spacing:0.103px;">Split</div>
<div class="t" style="left:979.50px;top:220.20px;font:400 11.3px/20px 'Liberation Sans', sans-serif;color:#2a2a2a;letter-spacing:0.060px;">Column</div>
<svg style="left:1021.6999999999999px;top:229.4px" width="5.2" height="3.0" viewBox="0 0 5.2 3"><path d="M0 0 L5.2 0 L2.6 3 Z" fill="#262626"/></svg>
<div class="t" style="left:1034.50px;top:207.20px;font:400 11.3px/20px 'Liberation Sans', sans-serif;color:#2a2a2a;letter-spacing:0.079px;">Group</div>
<div class="t" style="left:1045.50px;top:220.20px;font:400 11.3px/20px 'Liberation Sans', sans-serif;color:#2a2a2a;letter-spacing:-1.194px;">By</div>
<div class="t" style="left:1248.30px;top:207.20px;font:400 11.3px/20px 'Liberation Sans', sans-serif;color:#2a2a2a;letter-spacing:-0.031px;">Combine</div>
<svg style="left:1267.4px;top:229.4px" width="5.2" height="3.0" viewBox="0 0 5.2 3"><path d="M0 0 L5.2 0 L2.6 3 Z" fill="#262626"/></svg>
<div class="t" style="left:1314.50px;top:207.20px;font:400 11.3px/20px 'Liberation Sans', sans-serif;color:#2a2a2a;letter-spacing:0.079px;">Manage</div>
<div class="t" style="left:1303.50px;top:220.20px;font:400 11.3px/20px 'Liberation Sans', sans-serif;color:#2a2a2a;letter-spacing:-0.339px;">Parameters</div>
<svg style="left:1361.9px;top:229.4px" width="5.2" height="3.0" viewBox="0 0 5.2 3"><path d="M0 0 L5.2 0 L2.6 3 Z" fill="#262626"/></svg>
<div class="t" style="left:1383.30px;top:207.20px;font:400 11.3px/20px 'Liberation Sans', sans-serif;color:#2a2a2a;letter-spacing:-0.066px;">Data source</div>
<div class="t" style="left:1393.50px;top:220.20px;font:400 11.3px/20px 'Liberation Sans', sans-serif;color:#2a2a2a;letter-spacing:0.133px;">settings</div>
<div class="t" style="left:673.30px;top:173.20px;font:400 11.3px/20px 'Liberation Sans', sans-serif;color:#2a2a2a;letter-spacing:-0.050px;">Properties</div>
<div class="t" style="left:673.30px;top:195.20px;font:400 11.3px/20px 'Liberation Sans', sans-serif;color:#2a2a2a;letter-spacing:0.053px;">Advanced Editor</div>
<div class="t" style="left:673.30px;top:217.20px;font:400 11.3px/20px 'Liberation Sans', sans-serif;color:#2a2a2a;letter-spacing:0.029px;">Manage</div>
<svg style="left:718.6999999999999px;top:225.1px" width="5.2" height="3.0" viewBox="0 0 5.2 3"><path d="M0 0 L5.2 0 L2.6 3 Z" fill="#262626"/></svg>
<div class="t" style="left:1075.50px;top:173.20px;font:400 11.3px/20px 'Liberation Sans', sans-serif;color:#2a2a2a;letter-spacing:-0.206px;">Data Type: Text</div>
<svg style="left:1154.9px;top:181.4px" width="5.2" height="3.0" viewBox="0 0 5.2 3"><path d="M0 0 L5.2 0 L2.6 3 Z" fill="#262626"/></svg>
<div class="t" style="left:1094.50px;top:195.20px;font:400 11.3px/20px 'Liberation Sans', sans-serif;color:#2a2a2a;letter-spacing:-0.160px;">Use First Row as Headers</div>
<svg style="left:1227.4px;top:203.4px" width="5.2" height="3.0" viewBox="0 0 5.2 3"><path d="M0 0 L5.2 0 L2.6 3 Z" fill="#262626"/></svg>
<div class="t" style="left:1094.50px;top:217.20px;font:400 11.3px/20px 'Liberation Sans', sans-serif;color:#2a2a2a;letter-spacing:-0.235px;">Replace Values</div>
<div class="t" style="left:1481.50px;top:173.20px;font:400 11.3px/20px 'Liberation Sans', sans-serif;color:#2a2a2a;letter-spacing:-0.155px;">New Source</div>
<svg style="left:1545.7px;top:181.4px" width="5.2" height="3.0" viewBox="0 0 5.2 3"><path d="M0 0 L5.2 0 L2.6 3 Z" fill="#262626"/></svg>
<div class="t" style="left:1481.50px;top:195.20px;font:400 11.3px/20px 'Liberation Sans', sans-serif;color:#a3a3a3;letter-spacing:-0.255px;">Recent Sources</div>
<svg style="left:1562.7px;top:203.4px" width="5.2" height="3.0" viewBox="0 0 5.2 3"><path d="M0 0 L5.2 0 L2.6 3 Z" fill="#b5b5b5"/></svg>
<div class="t" style="left:1481.50px;top:217.20px;font:400 11.3px/20px 'Liberation Sans', sans-serif;color:#2a2a2a;letter-spacing:-0.152px;">Enter Data</div>
<div class="t" style="left:551.30px;top:240.20px;font:400 11.3px/20px 'Liberation Sans', sans-serif;color:#3b3b3b;letter-spacing:-0.278px;">Close</div>
<div class="t" style="left:665.00px;top:240.20px;font:400 11.3px/20px 'Liberation Sans', sans-serif;color:#3b3b3b;letter-spacing:-0.153px;">Query</div>
<div class="t" style="left:785.50px;top:240.20px;font:400 11.3px/20px 'Liberation Sans', sans-serif;color:#3b3b3b;letter-spacing:0.018px;">Manage Columns</div>
<div class="t" style="left:944.50px;top:240.20px;font:400 11.3px/20px 'Liberation Sans', sans-serif;color:#3b3b3b;letter-spacing:-0.055px;">Sort</div>
<div class="t" style="left:1080.80px;top:240.20px;font:400 11.3px/20px 'Liberation Sans', sans-serif;color:#3b3b3b;letter-spacing:-0.007px;">Transform</div>
<div class="t" style="left:1307.30px;top:240.20px;font:400 11.3px/20px 'Liberation Sans', sans-serif;color:#3b3b3b;letter-spacing:-0.339px;">Parameters</div>
<div class="t" style="left:1381.50px;top:240.20px;font:400 11.3px/20px 'Liberation Sans', sans-serif;color:#3b3b3b;letter-spacing:-0.246px;">Data Sources</div>
<div class="t" style="left:1487.30px;top:240.20px;font:400 11.3px/20px 'Liberation Sans', sans-serif;color:#3b3b3b;letter-spacing:-0.113px;">New Query</div>
<svg style="left:0;top:0" width="1679" height="844" viewBox="0 0 1679 844"><rect x="548.3" y="120" width="6.3" height="4" fill="#21a366"/><rect x="554.6" y="120" width="6.3" height="4" fill="#33c481"/><rect x="548.3" y="124" width="6.3" height="4" fill="#107c41"/><rect x="554.6" y="124" width="6.3" height="4" fill="#21a366"/><rect x="548.3" y="128" width="6.3" height="4" fill="#185c37"/><rect x="554.6" y="128" width="6.3" height="4" fill="#107c41"/><rect x="548.3" y="132" width="12.6" height="3.8" fill="#185c37"/><rect x="545" y="123.2" width="10.8" height="9.5" rx="0.8" fill="#107c41"/><path d="M548 125.2 L552.9 130.8 M552.9 125.2 L548 130.8" stroke="#fff" stroke-width="1.5" fill="none"/><circle cx="585.8" cy="128.6" r="7.8" fill="#f6c71e"/><ellipse cx="583.1" cy="126.5" rx="0.95" ry="1.3" fill="#5f5213"/><ellipse cx="588.6" cy="126.5" rx="0.95" ry="1.3" fill="#5f5213"/><path d="M581.3 130.2 Q585.8 135.8 590.4 130.2" fill="none" stroke="#5f5213" stroke-width="1.1" stroke-linecap="round"/><path d="M596 127.2 L600.8 127.2 L598.4 130 Z" fill="#8c8c8c"/><path d="M608.8 127.3 L615.9 127.3" stroke="#111" stroke-width="1.1"/><path d="M609.2 130.1 L615.5 130.1 L612.35 133.2 Z" fill="#111"/><path d="M556.5 177.5 L569.5 177.5 L576.5 184.5 L576.5 204.5 L556.5 204.5 Z" fill="#fff" stroke="#6e6e6e" stroke-width="1"/><path d="M569.5 177.5 L569.5 184.5 L576.5 184.5" fill="none" stroke="#6e6e6e" stroke-width="1"/><path d="M566 188.5 L574 188.5" stroke="#9fb2cb" stroke-width="1"/><path d="M566 191.5 L574 191.5" stroke="#9fb2cb" stroke-width="1"/><path d="M566 194.5 L574 194.5" stroke="#9fb2cb" stroke-width="1"/><path d="M566 197.5 L574 197.5" stroke="#9fb2cb" stroke-width="1"/><path d="M566 200.5 L574 200.5" stroke="#9fb2cb" stroke-width="1"/><path d="M551.3 189.6 C551.3 183.5 555 181.8 561.2 181.8 L561.2 178.6 L567 183.6 L561.2 188.6 L561.2 185.4 C557.5 185.4 555.3 186.2 555 189.6 Z" fill="#3a78b5"/><rect x="549.1" y="191" width="15.8" height="15.8" rx="1" fill="#8e5fae"/><rect x="551.4" y="192.2" width="11.4" height="8.4" fill="#fff"/><rect x="552.9" y="202.6" width="8.4" height="4.2" fill="#fff"/><rect x="555.6" y="203.4" width="2.4" height="3.4" fill="#8e5fae"/><path d="M614.5 176.5 L627.5 176.5 L634.5 183.5 L634.5 203.5 L614.5 203.5 Z" fill="#fff" stroke="#6e6e6e" stroke-width="1"/><path d="M627.5 176.5 L627.5 183.5 L634.5 183.5" fill="none" stroke="#6e6e6e" stroke-width="1"/><circle cx="633.9" cy="198.9" r="7.6" fill="#f3f5f7"/><path d="M628.3 197.6 A5.8 5.8 0 0 1 638.6 195.6" fill="none" stroke="#5fa88a" stroke-width="2.4"/><path d="M640.8 192.2 L640.6 198 L635.2 196.6 Z" fill="#5fa88a"/><path d="M639.5 200.2 A5.8 5.8 0 0 1 629.2 202.2" fill="none" stroke="#5fa88a" stroke-width="2.4"/><path d="M627 205.6 L627.2 199.8 L632.6 201.2 Z" fill="#5fa88a"/><path d="M654.5 175.5 L661.0 175.5 L664.5 179.0 L664.5 188.5 L654.5 188.5 Z" fill="#fff" stroke="#6e6e6e" stroke-width="1"/><path d="M661.0 175.5 L661.0 179.0 L664.5 179.0" fill="none" stroke="#6e6e6e" stroke-width="1"/><circle cx="657.4" cy="181.2" r="1.1" fill="#8a8a8a"/><circle cx="657.4" cy="185.2" r="1" fill="none" stroke="#8a8a8a" stroke-width="0.8"/><path d="M659.5 181.2 L662.5 181.2" stroke="#8aa6cc" stroke-width="1"/><rect x="660.5" y="183.5" width="9.0" height="7.0" fill="#fff" stroke="#7a7a7a" stroke-width="1"/><rect x="660.0" y="183.0" width="10.0" height="2.7" fill="#3b6fb6"/><path d="M660.5 188.10 L669.5 188.10" stroke="#9a9a9a" stroke-width="1"/><path d="M660.5 185.70 L669.5 185.70" stroke="#9a9a9a" stroke-width="0.8"/><path d="M663.50 185.70 L663.50 190.5" stroke="#9a9a9a" stroke-width="1"/><path d="M666.50 185.70 L666.50 190.5" stroke="#9a9a9a" stroke-width="1"/><path d="M657.5 208.5 L657.5 198.7 L669.5 198.7 L669.5 201 L667.8 201 L667.8 209" fill="#fff" stroke="#6e6e6e" stroke-width="1"/><path d="M667.8 198.7 L669.6 198.7 L669.6 201.2 L667.8 201.2 Z" fill="#6e6e6e"/><path d="M654.3 210.2 Q654.3 208.6 656 208.6 L666 208.6 L666 211.9 L656 211.9 Q654.3 211.9 654.3 210.2 Z" fill="#6e6e6e"/><path d="M659.5 201.5 L665.5 201.5 M659.5 203.5 L665.5 203.5 M659.5 205.5 L665.5 205.5" stroke="#9a9a9a" stroke-width="1"/><rect x="655.5" y="221.5" width="12.0" height="11.0" fill="#fff" stroke="#7a7a7a" stroke-width="1"/><rect x="655.0" y="221.0" width="13.0" height="3.1" fill="#3b6fb6"/><path d="M655.5 226.90 L667.5 226.90" stroke="#9a9a9a" stroke-width="1"/><path d="M655.5 229.70 L667.5 229.70" stroke="#9a9a9a" stroke-width="1"/><path d="M655.5 224.10 L667.5 224.10" stroke="#9a9a9a" stroke-width="0.8"/><path d="M659.50 224.10 L659.50 232.5" stroke="#9a9a9a" stroke-width="1"/><path d="M663.50 224.10 L663.50 232.5" stroke="#9a9a9a" stroke-width="1"/><rect x="787.5" y="178.5" width="27" height="25" fill="#fff"/><rect x="787.5" y="178.5" width="18" height="25" fill="#c7d6e7"/><path d="M787.5 183.5 L814.5 183.5" stroke="#8f9296" stroke-width="1"/><path d="M787.5 188.5 L814.5 188.5" stroke="#8f9296" stroke-width="1"/><path d="M787.5 193.5 L814.5 193.5" stroke="#8f9296" stroke-width="1"/><path d="M787.5 198.5 L814.5 198.5" stroke="#8f9296" stroke-width="1"/><path d="M796.5 178.5 L796.5 203.5" stroke="#a9b6c6" stroke-width="1"/><path d="M805.5 178.5 L805.5 203.5" stroke="#8f9296" stroke-width="1"/><rect x="787.5" y="178.5" width="27" height="25" fill="none" stroke="#6e6e6e" stroke-width="1.2"/><rect x="848.5" y="178" width="21" height="9.3" fill="#fff"/><path d="M848.5 178 L848.5 187.3 L853.7 187.3" fill="none" stroke="#6e6e6e" stroke-width="1"/><path d="M869.5 178 L869.5 187.3 L864.2 187.3" fill="none" stroke="#6e6e6e" stroke-width="1"/><rect x="855.4" y="178" width="7.5" height="15.2" fill="#bccde3"/><path d="M851.2 192.3 C856 195.5 862 200.5 867.4 206.4" stroke="#d4532f" stroke-width="2.1" fill="none" stroke-linecap="round"/><path d="M867 192.6 C861 196.5 855 201 851.3 206" stroke="#d4532f" stroke-width="2.1" fill="none" stroke-linecap="round"/><rect x="910.5" y="186" width="15" height="8.5" fill="#fff" stroke="#6e6e6e" stroke-width="1"/><path d="M910.5 190.2 L925.5 190.2 M915.5 186 L915.5 194.5 M920.5 186 L920.5 194.5" stroke="#6e6e6e" stroke-width="1"/><rect x="910" y="180.2" width="11" height="4.2" fill="#3b6fb6"/><path d="M916 185.2 L919.3 188.8 L925.3 180.6" fill="none" stroke="#edf3fb" stroke-width="3.4"/><path d="M916 185.2 L919.3 188.8 L925.3 180.6" fill="none" stroke="#5fa88a" stroke-width="1.7"/><text x="949" y="181.39999999999998" font-family="Liberation Sans, sans-serif" font-size="8.8" font-weight="400" fill="#3a78b5" stroke="#3a78b5" stroke-width="0.25">A</text><text x="949" y="189.79999999999998" font-family="Liberation Sans, sans-serif" font-size="8.8" font-weight="400" fill="#8e5fae" stroke="#8e5fae" stroke-width="0.25">Z</text><path d="M959.6 175.5 L959.6 189.2 M956.3 185.79999999999998 L959.6 189.39999999999998 L962.9 185.79999999999998" fill="none" stroke="#666" stroke-width="1.1"/><text x="949" y="203.2" font-family="Liberation Sans, sans-serif" font-size="8.8" font-weight="400" fill="#8e5fae" stroke="#8e5fae" stroke-width="0.25">Z</text><text x="949" y="211.6" font-family="Liberation Sans, sans-serif" font-size="8.8" font-weight="400" fill="#3a78b5" stroke="#3a78b5" stroke-width="0.25">A</text><path d="M959.6 197.3 L959.6 211 M956.3 207.6 L959.6 211.2 L962.9 207.6" fill="none" stroke="#666" stroke-width="1.1"/><path d="M989.5 204.8 L989.5 191.5 L995.8 191.5" fill="none" stroke="#6e6e6e" stroke-width="1"/><path d="M1016.5 204.8 L1016.5 191.5 L1010.2 191.5" fill="none" stroke="#6e6e6e" stroke-width="1"/><rect x="997.3" y="180.3" width="3.8" height="24.5" fill="#b9cce2" stroke="#c9ced4" stroke-width="0.6"/><rect x="1004.9" y="180.3" width="3.8" height="24.5" fill="#b9cce2" stroke="#c9ced4" stroke-width="0.6"/><path d="M1000.6 177 L1005.4 177 L1003 179.3 Z" fill="#3b6fb6"/><rect x="1037.5" y="181.5" width="20" height="6" fill="#fff" stroke="#7a7a7a" stroke-width="1"/><rect x="1044.5" y="194.5" width="20" height="6" fill="#fff" stroke="#7a7a7a" stroke-width="1"/><path d="M1051 187.6 L1056.6 194.4" stroke="#7a7a7a" stroke-width="1"/><rect x="1076.3" y="198.8" width="12.6" height="11.6" fill="#f4f4f4" stroke="#6e6e6e" stroke-width="1"/><rect x="1076.8" y="199.3" width="11.6" height="2.4" fill="#cfcfcf"/><path d="M1078 199.6 L1078 201.2 M1081 199.6 L1081 201.2 M1084 199.6 L1084 201.2 M1087 199.6 L1087 201.2" stroke="#666" stroke-width="1"/><path d="M1076.8 204.6 L1088.4 204.6 M1076.8 207.5 L1088.4 207.5 M1079.6 202 L1079.6 210 M1082.6 202 L1082.6 210 M1085.6 202 L1085.6 210" stroke="#b4b4b4" stroke-width="0.9"/><text x="1075" y="225.6" font-family="Liberation Sans, sans-serif" font-size="8.2" fill="#555">1</text><text x="1085.8" y="234.4" font-family="Liberation Sans, sans-serif" font-size="8.2" fill="#555">2</text><path d="M1076.8 226.6 C1076.8 230 1078.5 230.6 1081.2 230.6" fill="none" stroke="#3a78b5" stroke-width="1.5"/><path d="M1080.4 227.8 L1084 230.6 L1080.4 233.4 Z" fill="#3a78b5"/><rect x="1263.5" y="179.5" width="12.0" height="11.0" fill="#fff" stroke="#7a7a7a" stroke-width="1"/><rect x="1263.0" y="179.0" width="13.0" height="2.7" fill="#3b6fb6"/><path d="M1263.5 184.63 L1275.5 184.63" stroke="#9a9a9a" stroke-width="1"/><path d="M1263.5 187.57 L1275.5 187.57" stroke="#9a9a9a" stroke-width="1"/><path d="M1263.5 181.70 L1275.5 181.70" stroke="#9a9a9a" stroke-width="0.8"/><path d="M1267.50 181.70 L1267.50 190.5" stroke="#9a9a9a" stroke-width="1"/><path d="M1271.50 181.70 L1271.50 190.5" stroke="#9a9a9a" stroke-width="1"/><rect x="1265.3" y="182.2" width="14.4" height="13.2" fill="#edf3fb"/><rect x="1266.5" y="183.5" width="12.0" height="11.0" fill="#fff" stroke="#7a7a7a" stroke-width="1"/><rect x="1266.0" y="183.0" width="13.0" height="2.7" fill="#3b6fb6"/><path d="M1266.5 188.63 L1278.5 188.63" stroke="#c9a898" stroke-width="1"/><path d="M1266.5 191.57 L1278.5 191.57" stroke="#c9a898" stroke-width="1"/><path d="M1266.5 185.70 L1278.5 185.70" stroke="#c9a898" stroke-width="0.8"/><path d="M1270.50 185.70 L1270.50 194.5" stroke="#c9a898" stroke-width="1"/><path d="M1274.50 185.70 L1274.50 194.5" stroke="#c9a898" stroke-width="1"/><rect x="1272" y="188.6" width="7.8" height="7.4" fill="#edf3fb"/><path d="M1275.9 189.4 L1275.9 195.2 M1273 192.3 L1278.8 192.3" stroke="#4f9f7c" stroke-width="2"/><rect x="1323.5" y="177.5" width="22" height="27" fill="#fff" stroke="#6e6e6e" stroke-width="1"/><path d="M1326.2 181.3 L1331.6 181.3" stroke="#a58f8f" stroke-width="1"/><rect x="1334.5" y="180.5" width="8" height="4.8" fill="#e3edf8" stroke="#3a78b5" stroke-width="1"/><path d="M1326.2 189.3 L1331.6 189.3" stroke="#a58f8f" stroke-width="1"/><rect x="1334.5" y="188.5" width="8" height="4.8" fill="#e3edf8" stroke="#3a78b5" stroke-width="1"/><path d="M1326.2 197.3 L1331.6 197.3" stroke="#a58f8f" stroke-width="1"/><rect x="1334.5" y="196.5" width="8" height="4.8" fill="#e3edf8" stroke="#3a78b5" stroke-width="1"/><path d="M1403.5 177.5 L1417.0 177.5 L1423.5 184.0 L1423.5 204.5 L1403.5 204.5 Z" fill="#fff" stroke="#6e6e6e" stroke-width="1"/><path d="M1417.0 177.5 L1417.0 184.0 L1423.5 184.0" fill="none" stroke="#6e6e6e" stroke-width="1"/><g transform="translate(1420.6 197.8)"><circle r="8.6" fill="#f3f5f7"/><rect x="-1.9" y="-7.6" width="3.8" height="4" rx="0.6" fill="#e8873a" transform="rotate(0)"/><rect x="-1.9" y="-7.6" width="3.8" height="4" rx="0.6" fill="#e8873a" transform="rotate(45)"/><rect x="-1.9" y="-7.6" width="3.8" height="4" rx="0.6" fill="#e8873a" transform="rotate(90)"/><rect x="-1.9" y="-7.6" width="3.8" height="4" rx="0.6" fill="#e8873a" transform="rotate(135)"/><rect x="-1.9" y="-7.6" width="3.8" height="4" rx="0.6" fill="#e8873a" transform="rotate(180)"/><rect x="-1.9" y="-7.6" width="3.8" height="4" rx="0.6" fill="#e8873a" transform="rotate(225)"/><rect x="-1.9" y="-7.6" width="3.8" height="4" rx="0.6" fill="#e8873a" transform="rotate(270)"/><rect x="-1.9" y="-7.6" width="3.8" height="4" rx="0.6" fill="#e8873a" transform="rotate(315)"/><circle r="5.4" fill="#e8873a"/><circle r="2.3" fill="#fff"/></g><path d="M1464.5 176.5 L1471.0 176.5 L1474.5 180.0 L1474.5 189.5 L1464.5 189.5 Z" fill="#fff" stroke="#6e6e6e" stroke-width="1"/><path d="M1471.0 176.5 L1471.0 180.0 L1474.5 180.0" fill="none" stroke="#6e6e6e" stroke-width="1"/><rect x="1470.6" y="180.2" width="8" height="10.6" fill="#f3f5f7"/><path d="M1471.2 182.2 L1471.2 189.2 A3.4 1.3 0 0 0 1478 189.2 L1478 182.2 Z" fill="#e9bd74"/><ellipse cx="1474.6" cy="182.2" rx="3.4" ry="1.3" fill="#f3d39c"/><path d="M1462.5 197.8 L1468.7 197.8 L1472 201.10000000000002 L1472 210.5 L1462.5 210.5 Z" fill="#f5f7fa" stroke="#a9b8d2" stroke-width="1"/><path d="M1468.7 197.8 L1468.7 201.10000000000002 L1472 201.10000000000002" fill="none" stroke="#a9b8d2" stroke-width="1"/><circle cx="1473.4" cy="207.6" r="4.1" fill="#f5f7fa" stroke="#a9b8d2" stroke-width="1.1"/><path d="M1473.4 205.2 L1473.4 207.8 L1475.4 207.8" fill="none" stroke="#a9b8d2" stroke-width="1"/><rect x="1463.5" y="221.5" width="12.0" height="11.0" fill="#fff" stroke="#7a7a7a" stroke-width="1"/><rect x="1463.0" y="221.0" width="13.0" height="3.1" fill="#3b6fb6"/><path d="M1463.5 226.90 L1475.5 226.90" stroke="#9a9a9a" stroke-width="1"/><path d="M1463.5 229.70 L1475.5 229.70" stroke="#9a9a9a" stroke-width="1"/><path d="M1463.5 224.10 L1475.5 224.10" stroke="#9a9a9a" stroke-width="0.8"/><path d="M1467.50 224.10 L1467.50 232.5" stroke="#9a9a9a" stroke-width="1"/><path d="M1471.50 224.10 L1471.50 232.5" stroke="#9a9a9a" stroke-width="1"/></svg>
<div style="left:537px;top:260px;width:1093px;height:508.7px;background:#666666;"></div>
<div style="left:716px;top:260px;width:1px;height:508.7px;background:#454545;"></div>
<div style="left:1364px;top:260px;width:1px;height:508.7px;background:#454545;"></div>
<div class="t" style="left:550.00px;top:270.90px;font:400 10.8px/20px 'Liberation Sans', sans-serif;color:#ececec;letter-spacing:-0.438px;">Queries [1]</div>
<div style="left:550px;top:287.6px;width:152px;height:1.1px;background:#86cba8;"></div>
<div style="left:550px;top:289px;width:152px;height:24.3px;background:#419468;"></div>
<div class="t" style="left:579.30px;top:291.60px;font:400 11.5px/20px 'Liberation Sans', sans-serif;color:#fff;letter-spacing:0.102px;">Table3</div>
<svg style="left:699px;top:271.5px" width="10" height="13" viewBox="0 0 10 13"><path d="M7.6 1.6 L2.2 6.5 L7.6 11.4" stroke="#fff" stroke-width="2.2" fill="none"/></svg>
<div style="left:720.6px;top:269.8px;width:110.4px;height:28px;background:#b1b1b1;border:1px solid #494949;"></div>
<div style="left:834.8px;top:269.8px;width:525.4px;height:28px;background:#b1b1b1;border:1px solid #494949;"></div>
<svg style="left:734px;top:277px" width="54" height="13" viewBox="0 0 54 13"><path d="M1.2 1.2 L13 12 M13 1.2 L1.2 12" stroke="#c4c4c4" stroke-width="2" fill="none"/><path d="M38.5 7 L42.5 11.5 L51.5 1" stroke="#c4c4c4" stroke-width="2" fill="none"/></svg>
<div class="t" style="left:806.00px;top:273.30px;font:italic 400 16.5px/20px 'Liberation Serif', serif;color:#8c8c8c;letter-spacing:0.539px;">fx</div>
<svg style="left:1342px;top:280.5px" width="11" height="8" viewBox="0 0 11 8"><path d="M0.8 1 L5.5 6.5 L10.2 1" stroke="#707070" stroke-width="1.9" fill="none"/></svg>
<div class="t" style="left:843.75px;top:274.90px;font:400 11px/20px 'Liberation Mono', monospace;color:#3a3a3a;letter-spacing:-0.021px;">= Table.TransformColumnTypes(Source,{{</div>
<div class="t" style="left:1093.78px;top:274.90px;font:400 11px/20px 'Liberation Mono', monospace;color:#b32424;letter-spacing:-0.023px;">&quot;Column1&quot;</div>
<div class="t" style="left:1153.00px;top:274.90px;font:400 11px/20px 'Liberation Mono', monospace;color:#3a3a3a;letter-spacing:-0.022px;">, </div>
<div class="t" style="left:1166.16px;top:274.90px;font:400 11px/20px 'Liberation Mono', monospace;color:#1a1ad6;letter-spacing:-0.022px;">type</div>
<div class="t" style="left:1192.48px;top:274.90px;font:400 11px/20px 'Liberation Mono', monospace;color:#3a3a3a;letter-spacing:-0.030px;"> </div>
<div class="t" style="left:1199.06px;top:274.90px;font:400 11px/20px 'Liberation Mono', monospace;color:#1f8a86;letter-spacing:-0.022px;">text</div>
<div class="t" style="left:1225.38px;top:274.90px;font:400 11px/20px 'Liberation Mono', monospace;color:#3a3a3a;letter-spacing:-0.022px;">}, {</div>
<div class="t" style="left:1251.70px;top:274.90px;font:400 11px/20px 'Liberation Mono', monospace;color:#b32424;letter-spacing:-0.023px;">&quot;Column2&quot;</div>
<div class="t" style="left:1310.92px;top:274.90px;font:400 11px/20px 'Liberation Mono', monospace;color:#3a3a3a;letter-spacing:-0.030px;">,</div>
<div style="left:721.5px;top:302px;width:638.5px;height:21.7px;background:#616161;border-top:1px solid #4c4c4c;border-bottom:1.4px solid #474747;"></div>
<div style="left:750px;top:302px;width:160px;height:21.7px;background:#419468;border-top:1px solid #3a7f5a;border-bottom:1.4px solid #2f6e4c;"></div>
<div style="left:750px;top:323.7px;width:610px;height:4.3px;background:#10b4a1;"></div>
<div style="left:721.5px;top:323.7px;width:28.5px;height:150.8px;background:#656565;"></div>
<div style="left:750px;top:328px;width:610px;height:146.5px;background:#fff;"></div>
<div style="left:750px;top:328px;width:160px;height:146.5px;background:#d2efe2;"></div>
<div style="left:910px;top:347.9px;width:450px;height:1.1px;background:#d8d8d8;"></div>
<div style="left:750px;top:347.9px;width:160px;height:1.1px;background:#c3e2d4;"></div>
<div style="left:721.5px;top:347.9px;width:28.5px;height:1.1px;background:#4a4a4a;"></div>
<div class="t" style="left:732.57px;top:329.10px;font:400 11.6px/20px 'Liberation Sans', sans-serif;color:#fff;">1</div>
<div style="left:910px;top:368.9px;width:450px;height:1.1px;background:#d8d8d8;"></div>
<div style="left:750px;top:368.9px;width:160px;height:1.1px;background:#c3e2d4;"></div>
<div style="left:721.5px;top:368.9px;width:28.5px;height:1.1px;background:#4a4a4a;"></div>
<div class="t" style="left:732.57px;top:350.10px;font:400 11.6px/20px 'Liberation Sans', sans-serif;color:#fff;">2</div>
<div style="left:910px;top:389.9px;width:450px;height:1.1px;background:#d8d8d8;"></div>
<div style="left:750px;top:389.9px;width:160px;height:1.1px;background:#c3e2d4;"></div>
<div style="left:721.5px;top:389.9px;width:28.5px;height:1.1px;background:#4a4a4a;"></div>
<div class="t" style="left:732.57px;top:371.10px;font:400 11.6px/20px 'Liberation Sans', sans-serif;color:#fff;">3</div>
<div style="left:910px;top:410.9px;width:450px;height:1.1px;background:#d8d8d8;"></div>
<div style="left:750px;top:410.9px;width:160px;height:1.1px;background:#c3e2d4;"></div>
<div style="left:721.5px;top:410.9px;width:28.5px;height:1.1px;background:#4a4a4a;"></div>
<div class="t" style="left:732.57px;top:392.10px;font:400 11.6px/20px 'Liberation Sans', sans-serif;color:#fff;">4</div>
<div style="left:910px;top:431.9px;width:450px;height:1.1px;background:#d8d8d8;"></div>
<div style="left:750px;top:431.9px;width:160px;height:1.1px;background:#c3e2d4;"></div>
<div style="left:721.5px;top:431.9px;width:28.5px;height:1.1px;background:#4a4a4a;"></div>
<div class="t" style="left:732.57px;top:413.10px;font:400 11.6px/20px 'Liberation Sans', sans-serif;color:#fff;">5</div>
<div style="left:910px;top:452.9px;width:450px;height:1.1px;background:#d8d8d8;"></div>
<div style="left:750px;top:452.9px;width:160px;height:1.1px;background:#c3e2d4;"></div>
<div style="left:721.5px;top:452.9px;width:28.5px;height:1.1px;background:#4a4a4a;"></div>
<div class="t" style="left:732.57px;top:434.10px;font:400 11.6px/20px 'Liberation Sans', sans-serif;color:#fff;">6</div>
<div style="left:910px;top:473.9px;width:450px;height:1.1px;background:#d8d8d8;"></div>
<div style="left:750px;top:473.9px;width:160px;height:1.1px;background:#c3e2d4;"></div>
<div style="left:721.5px;top:473.9px;width:28.5px;height:1.1px;background:#4a4a4a;"></div>
<div class="t" style="left:732.57px;top:455.10px;font:400 11.6px/20px 'Liberation Sans', sans-serif;color:#fff;">7</div>
<div style="left:721.5px;top:327.3px;width:28.5px;height:1.1px;background:#4a4a4a;"></div>
<div style="left:909.5px;top:328px;width:1.1px;height:146.5px;background:#cfcfcf;"></div>
<div style="left:909.5px;top:302px;width:1.1px;height:21.7px;background:#484848;"></div>
<div style="left:909.5px;top:323.7px;width:1.1px;height:4.3px;background:#5fd6c8;"></div>
<div style="left:1069.5px;top:328px;width:1.1px;height:146.5px;background:#cfcfcf;"></div>
<div style="left:1069.5px;top:302px;width:1.1px;height:21.7px;background:#484848;"></div>
<div style="left:1069.5px;top:323.7px;width:1.1px;height:4.3px;background:#5fd6c8;"></div>
<div style="left:1229.5px;top:328px;width:1.1px;height:146.5px;background:#cfcfcf;"></div>
<div style="left:1229.5px;top:302px;width:1.1px;height:21.7px;background:#484848;"></div>
<div style="left:1229.5px;top:323.7px;width:1.1px;height:4.3px;background:#5fd6c8;"></div>
<div style="left:749.5px;top:302px;width:1.1px;height:172.5px;background:#484848;"></div>
<div style="left:721px;top:302px;width:1.1px;height:172.5px;background:#484848;"></div>
<div class="t" style="left:775.20px;top:303.20px;font:700 10.8px/20px 'Liberation Sans', sans-serif;color:#fff;letter-spacing:-0.312px;">Column1</div>
<div class="t" style="left:935.00px;top:303.00px;font:700 10.6px/20px 'Liberation Sans', sans-serif;color:#fff;letter-spacing:-0.147px;">Column2</div>
<div class="t" style="left:1095.00px;top:303.00px;font:700 10.6px/20px 'Liberation Sans', sans-serif;color:#fff;letter-spacing:-0.147px;">Column3</div>
<div class="t" style="left:1255.00px;top:303.00px;font:700 10.6px/20px 'Liberation Sans', sans-serif;color:#fff;letter-spacing:-0.147px;">Column4</div>
<div style="left:891.8px;top:305.5px;width:15.2px;height:15.2px;background:#fff;"></div>
<svg style="left:896.0999999999999px;top:311px" width="7" height="4" viewBox="0 0 7 4"><path d="M0 0 L7 0 L3.5 4 Z" fill="#4d4d4d"/></svg>
<div style="left:1052.3px;top:305.5px;width:15.2px;height:15.2px;background:#fff;"></div>
<svg style="left:1056.6px;top:311px" width="7" height="4" viewBox="0 0 7 4"><path d="M0 0 L7 0 L3.5 4 Z" fill="#4d4d4d"/></svg>
<div style="left:1212.3px;top:305.5px;width:15.2px;height:15.2px;background:#fff;"></div>
<svg style="left:1216.6px;top:311px" width="7" height="4" viewBox="0 0 7 4"><path d="M0 0 L7 0 L3.5 4 Z" fill="#4d4d4d"/></svg>
<div class="t" style="left:753.80px;top:328.20px;font:400 10.8px/20px 'Liberation Sans', sans-serif;color:#3c3c3c;letter-spacing:-0.129px;">OrderID</div>
<div class="t" style="left:914.30px;top:328.20px;font:400 10.8px/20px 'Liberation Sans', sans-serif;color:#3c3c3c;letter-spacing:-0.078px;">Date</div>
<div class="t" style="left:1074.30px;top:328.20px;font:400 10.8px/20px 'Liberation Sans', sans-serif;color:#3c3c3c;letter-spacing:0.032px;">ProductID</div>
<div class="t" style="left:1234.30px;top:328.20px;font:400 10.8px/20px 'Liberation Sans', sans-serif;color:#3c3c3c;letter-spacing:0.223px;">Quantity</div>
<div class="t" style="left:753.80px;top:349.20px;font:400 10.8px/20px 'Liberation Sans', sans-serif;color:#3c3c3c;letter-spacing:-0.370px;">SO-001</div>
<div class="t" style="left:945.00px;top:349.20px;font:italic 400 10.8px/20px 'Liberation Sans', sans-serif;color:#2a2a2a;letter-spacing:0.215px;">01/04/2024 12:00:00 am</div>
<div class="t" style="left:1074.30px;top:349.20px;font:400 10.8px/20px 'Liberation Sans', sans-serif;color:#3c3c3c;letter-spacing:-0.355px;">P001</div>
<div class="t" style="left:753.80px;top:370.20px;font:400 10.8px/20px 'Liberation Sans', sans-serif;color:#3c3c3c;letter-spacing:-0.370px;">SO-002</div>
<div class="t" style="left:945.00px;top:370.20px;font:italic 400 10.8px/20px 'Liberation Sans', sans-serif;color:#2a2a2a;letter-spacing:0.215px;">03/04/2024 12:00:00 am</div>
<div class="t" style="left:1074.30px;top:370.20px;font:400 10.8px/20px 'Liberation Sans', sans-serif;color:#3c3c3c;letter-spacing:-0.355px;">P002</div>
<div class="t" style="left:753.80px;top:391.20px;font:400 10.8px/20px 'Liberation Sans', sans-serif;color:#3c3c3c;letter-spacing:-0.370px;">SO-003</div>
<div class="t" style="left:945.00px;top:391.20px;font:italic 400 10.8px/20px 'Liberation Sans', sans-serif;color:#2a2a2a;letter-spacing:0.215px;">05/04/2024 12:00:00 am</div>
<div class="t" style="left:1079.60px;top:391.20px;font:400 10.8px/20px 'Liberation Sans', sans-serif;color:#3c3c3c;letter-spacing:-0.355px;">P003</div>
<div class="t" style="left:753.80px;top:412.20px;font:400 10.8px/20px 'Liberation Sans', sans-serif;color:#3c3c3c;letter-spacing:-0.370px;">SO-004</div>
<div class="t" style="left:945.00px;top:412.20px;font:italic 400 10.8px/20px 'Liberation Sans', sans-serif;color:#2a2a2a;letter-spacing:0.215px;">07/04/2024 12:00:00 am</div>
<div class="t" style="left:1074.30px;top:412.20px;font:400 10.8px/20px 'Liberation Sans', sans-serif;color:#3c3c3c;letter-spacing:-0.355px;">P001</div>
<div class="t" style="left:753.80px;top:433.20px;font:400 10.8px/20px 'Liberation Sans', sans-serif;color:#3c3c3c;letter-spacing:-0.370px;">SO-005</div>
<div class="t" style="left:945.00px;top:433.20px;font:italic 400 10.8px/20px 'Liberation Sans', sans-serif;color:#2a2a2a;letter-spacing:0.215px;">10/04/2024 12:00:00 am</div>
<div class="t" style="left:1074.30px;top:433.20px;font:400 10.8px/20px 'Liberation Sans', sans-serif;color:#3c3c3c;letter-spacing:-0.355px;">P002</div>
<div class="t" style="left:753.80px;top:454.20px;font:400 10.8px/20px 'Liberation Sans', sans-serif;color:#3c3c3c;letter-spacing:-0.370px;">SO-006</div>
<div class="t" style="left:945.00px;top:454.20px;font:italic 400 10.8px/20px 'Liberation Sans', sans-serif;color:#2a2a2a;letter-spacing:0.215px;">12/04/2024 12:00:00 am</div>
<div class="t" style="left:1074.30px;top:454.20px;font:400 10.8px/20px 'Liberation Sans', sans-serif;color:#3c3c3c;letter-spacing:-0.355px;">P003</div>
<svg style="left:0;top:0" width="1679" height="844" viewBox="0 0 1679 844"><rect x="555" y="293.2" width="16" height="15.6" fill="#fff"/><rect x="556.2" y="297.6" width="3.8" height="2.6" fill="#419468"/><rect x="561.2" y="297.6" width="3.8" height="2.6" fill="#419468"/><rect x="566.2" y="297.6" width="3.8" height="2.6" fill="#419468"/><rect x="556.2" y="301.3" width="3.8" height="2.6" fill="#419468"/><rect x="561.2" y="301.3" width="3.8" height="2.6" fill="#419468"/><rect x="566.2" y="301.3" width="3.8" height="2.6" fill="#419468"/><rect x="556.2" y="305.0" width="3.8" height="2.6" fill="#419468"/><rect x="561.2" y="305.0" width="3.8" height="2.6" fill="#419468"/><rect x="566.2" y="305.0" width="3.8" height="2.6" fill="#419468"/><rect x="727" y="307.3" width="13.2" height="11.4" fill="#fff"/><rect x="728.0" y="310.0" width="2.1" height="1.9" fill="#555"/><rect x="731.1" y="310.0" width="2.1" height="1.9" fill="#555"/><rect x="734.2" y="310.0" width="2.1" height="1.9" fill="#555"/><rect x="737.3" y="310.0" width="2.1" height="1.9" fill="#555"/><rect x="728.0" y="312.9" width="2.1" height="1.9" fill="#555"/><rect x="731.1" y="312.9" width="2.1" height="1.9" fill="#555"/><rect x="734.2" y="312.9" width="2.1" height="1.9" fill="#555"/><rect x="737.3" y="312.9" width="2.1" height="1.9" fill="#555"/><rect x="728.0" y="315.8" width="2.1" height="1.9" fill="#555"/><rect x="731.1" y="315.8" width="2.1" height="1.9" fill="#555"/><rect x="734.2" y="315.8" width="2.1" height="1.9" fill="#555"/><rect x="737.3" y="315.8" width="2.1" height="1.9" fill="#555"/><path d="M741.6 315.2 L745.8 315.2 L743.7 317.7 Z" fill="#fff"/><text x="752.8" y="318.2" font-size="10" font-family="Liberation Sans, sans-serif" fill="#fff">A</text><text x="759.4" y="314" font-size="9" font-family="Liberation Sans, sans-serif" fill="#fff">B</text><text x="763.8" y="321" font-size="9" font-family="Liberation Sans, sans-serif" fill="#fff">C</text><text x="913" y="311.4" font-size="8.4" textLength="15.6" lengthAdjust="spacingAndGlyphs" font-family="Liberation Sans, sans-serif" fill="#fff">ABC</text><text x="913" y="320.8" font-size="10.4" textLength="15.8" lengthAdjust="spacingAndGlyphs" font-family="Liberation Sans, sans-serif" fill="#fff">123</text><text x="1072.8" y="318.2" font-size="10" font-family="Liberation Sans, sans-serif" fill="#fff">A</text><text x="1079.3999999999999" y="314" font-size="9" font-family="Liberation Sans, sans-serif" fill="#fff">B</text><text x="1083.8" y="321" font-size="9" font-family="Liberation Sans, sans-serif" fill="#fff">C</text><text x="1232.6" y="311.4" font-size="8.4" textLength="15.6" lengthAdjust="spacingAndGlyphs" font-family="Liberation Sans, sans-serif" fill="#fff">ABC</text><text x="1232.6" y="320.8" font-size="10.4" textLength="15.8" lengthAdjust="spacingAndGlyphs" font-family="Liberation Sans, sans-serif" fill="#fff">123</text></svg>
<div style="left:750.8px;top:750.8px;width:608.8px;height:16.8px;background:#f0f0f0;"></div>
<div style="left:785px;top:751.5px;width:410.8px;height:15.4px;background:#cdcdcd;"></div>
<svg style="left:765.5px;top:753.7px" width="10" height="12" viewBox="0 0 10 12"><path d="M7.6 0.9 L2 5.6 L7.6 10.3" stroke="#505050" stroke-width="2.3" fill="none"/></svg>
<svg style="left:1334px;top:753.7px" width="10" height="12" viewBox="0 0 10 12"><path d="M1.6 0.9 L7.2 5.6 L1.6 10.3" stroke="#505050" stroke-width="2.3" fill="none"/></svg>
<div class="t" style="left:1379.50px;top:280.00px;font:400 19.8px/20px 'Liberation Sans', sans-serif;color:#f6f6f6;letter-spacing:-0.667px;-webkit-text-stroke:0.6px #666666;">Query Settings</div>
<svg style="left:1592.5px;top:284px" width="12" height="12" viewBox="0 0 12 12"><path d="M0.8 0.8 L11 11 M11 0.8 L0.8 11" stroke="#fff" stroke-width="1.3" fill="none"/></svg>
<svg style="left:1375.8px;top:324.3px" width="6" height="6" viewBox="0 0 6 6"><path d="M5.8 0.2 L5.8 5.8 L0.2 5.8 Z" fill="#f0f0f0"/></svg>
<svg style="left:1375.8px;top:425px" width="6" height="6" viewBox="0 0 6 6"><path d="M5.8 0.2 L5.8 5.8 L0.2 5.8 Z" fill="#f0f0f0"/></svg>
<div class="t" style="left:1388.30px;top:317.40px;font:700 11.6px/20px 'Liberation Sans', sans-serif;color:#fff;letter-spacing:-0.523px;">PROPERTIES</div>
<div class="t" style="left:1388.30px;top:337.80px;font:400 11.3px/20px 'Liberation Sans', sans-serif;color:#fff;letter-spacing:0.265px;">Name</div>
<div style="left:1388px;top:357px;width:218px;height:21.5px;background:#d5d5d5;border:1px solid #5c5c5c;"></div>
<div class="t" style="left:1394.50px;top:358.60px;font:400 11.3px/20px 'Liberation Sans', sans-serif;color:#3a3a3a;letter-spacing:-0.133px;">Table3</div>
<div class="t" style="left:1388.30px;top:384.40px;font:400 11.3px/20px 'Liberation Sans', sans-serif;color:#fff;letter-spacing:0.201px;">All Properties</div>
<div class="t" style="left:1388.30px;top:418.10px;font:700 11.6px/20px 'Liberation Sans', sans-serif;color:#fff;letter-spacing:-0.483px;">APPLIED STEPS</div>
<div style="left:1388px;top:442.3px;width:218px;height:305px;background:#d5d5d5;border:1px solid #555;"></div>
<div class="t" style="left:1409.00px;top:443.50px;font:400 11.5px/20px 'Liberation Sans', sans-serif;color:#1a1a1a;letter-spacing:-0.106px;">Source</div>
<div style="left:1389px;top:463px;width:216px;height:19.6px;background:#419468;"></div>
<div class="t" style="left:1409.00px;top:463.50px;font:400 11.5px/20px 'Liberation Sans', sans-serif;color:#fff;letter-spacing:0.141px;">Changed Type</div>
<svg style="left:1393.5px;top:468.3px" width="12" height="10" viewBox="0 0 12 10"><path d="M1 0.8 L10.8 9.4 M10.8 0.8 L1 9.4" stroke="#fff" stroke-width="1.3" fill="none"/><path d="M0.5 0.9 L4 0.9 M7.5 0.9 L11.5 0.9" stroke="#fff" stroke-width="1.2"/></svg>
<div style="left:537px;top:768px;width:1093px;height:22px;background:#bfbcb8;border-top:1px solid #3c3c3c;"></div>
<div class="t" style="left:542.00px;top:769.80px;font:400 10.5px/20px 'Liberation Sans', sans-serif;color:#2e2e2e;letter-spacing:-0.178px;">5 COLUMNS, 7 ROWS</div>
<div class="t" style="left:663.00px;top:769.80px;font:400 10.8px/20px 'Liberation Sans', sans-serif;color:#2e2e2e;letter-spacing:0.137px;">Column profiling based on top 1000 rows</div>
<div class="t" style="left:1444.50px;top:769.80px;font:400 10.5px/20px 'Liberation Sans', sans-serif;color:#2e2e2e;letter-spacing:-0.175px;">PREVIEW DOWNLOADED AT 4:54 PM</div>
<div style="left:0px;top:810px;width:1679px;height:34px;background:#515151;"></div>
<div style="left:236px;top:810px;width:70px;height:8px;background:#fff;"></div>
<div style="left:0px;top:810px;width:241px;height:34px;background:#515151;border-top-right-radius:4px;"></div>
<div style="left:301.3px;top:810px;width:1679px;height:34px;background:#515151;border-top-left-radius:4px;"></div>
<div style="left:0px;top:841.7px;width:1679px;height:2.3px;background:#4c4c4c;"></div>
<svg style="left:28px;top:821px" width="8" height="10" viewBox="0 0 8 10"><path d="M6.6 0.6 L1.2 5 L6.6 9.4" stroke="#8d8d8d" stroke-width="1.2" fill="none"/></svg>
<svg style="left:60.5px;top:821px" width="8" height="10" viewBox="0 0 8 10"><path d="M1.4 0.6 L6.8 5 L1.4 9.4" stroke="#8d8d8d" stroke-width="1.2" fill="none"/></svg>
<div class="t" style="left:125.00px;top:816.30px;font:400 14.2px/20px 'Liberation Sans', sans-serif;color:#fff;letter-spacing:-0.840px;">Sales</div>
<div class="t" style="left:180.80px;top:816.30px;font:400 14.2px/20px 'Liberation Sans', sans-serif;color:#fff;letter-spacing:-0.528px;">Sheet3</div>
<div style="left:241px;top:806px;width:60.3px;height:32.2px;background:#fff;border-radius:0 0 5px 5px;"></div>
<div class="t" style="left:249.10px;top:813.20px;font:400 14px/20px 'Liberation Sans', sans-serif;color:#1c1c1c;letter-spacing:-0.062px;text-shadow:0.3px 0 0 #1c1c1c;">Sheet4</div>
<div style="left:249.1px;top:833px;width:44px;height:2.1px;background:#1e6b3e;"></div>
<div class="t" style="left:319.30px;top:816.30px;font:400 14.2px/20px 'Liberation Sans', sans-serif;color:#fff;letter-spacing:-0.287px;">Products</div>
<div style="left:168.5px;top:817.5px;width:1px;height:17px;background:#7a7a7a;"></div>
<div style="left:236px;top:817.5px;width:1px;height:17px;background:#7a7a7a;"></div>
<div style="left:305.3px;top:817.5px;width:1px;height:17px;background:#7a7a7a;"></div>
<div style="left:386px;top:817.5px;width:1px;height:17px;background:#7a7a7a;"></div>
<svg style="left:428.5px;top:820px" width="12" height="12" viewBox="0 0 12 12"><path d="M6 0.3 L6 11.7 M0.3 6 L11.7 6" stroke="#e6e6e6" stroke-width="1.1" fill="none"/></svg>
<div style="left:1154.2px;top:820.9px;width:1.8px;height:1.8px;background:#e0e0e0;border-radius:1px;"></div>
<div style="left:1154.2px;top:825.1px;width:1.8px;height:1.8px;background:#e0e0e0;border-radius:1px;"></div>
<div style="left:1154.2px;top:829.3000000000001px;width:1.8px;height:1.8px;background:#e0e0e0;border-radius:1px;"></div>
<div style="left:1172px;top:818.7px;width:1679px;height:15px;background:#3a3a3a;border-radius:7.5px 0 0 7.5px;"></div>
<svg style="left:1176.5px;top:821.7px" width="7" height="9" viewBox="0 0 7 9"><path d="M6.5 0.3 L6.5 8.7 L0.5 4.5 Z" fill="#d0d0d0"/></svg>
<div style="left:1188px;top:822px;width:1679px;height:7.8px;background:#c8c8c8;border-radius:4px 0 0 4px;"></div>
<div style="left:1630px;top:765px;width:49px;height:50px;overflow:hidden;"><div class="t" style="left:-32px;top:6.5px;font:400 19.5px/20px 'Liberation Sans',sans-serif;color:rgba(125,125,125,0.5);letter-spacing:-0.72px;">Activate W</div></div>
<div style="left:1596px;top:768.7px;width:34px;height:21px;overflow:hidden;"><div class="t" style="left:2px;top:2.8px;font:400 19.5px/20px 'Liberation Sans',sans-serif;color:rgba(125,125,125,0.22);letter-spacing:-0.72px;">Activate W</div></div>
<div class="t" style="left:1599.00px;top:794.50px;font:400 14.2px/20px 'Liberation Sans', sans-serif;color:rgba(125,125,125,0.5);letter-spacing:0.590px;">Go to Settin</div>
</div></body></html>
